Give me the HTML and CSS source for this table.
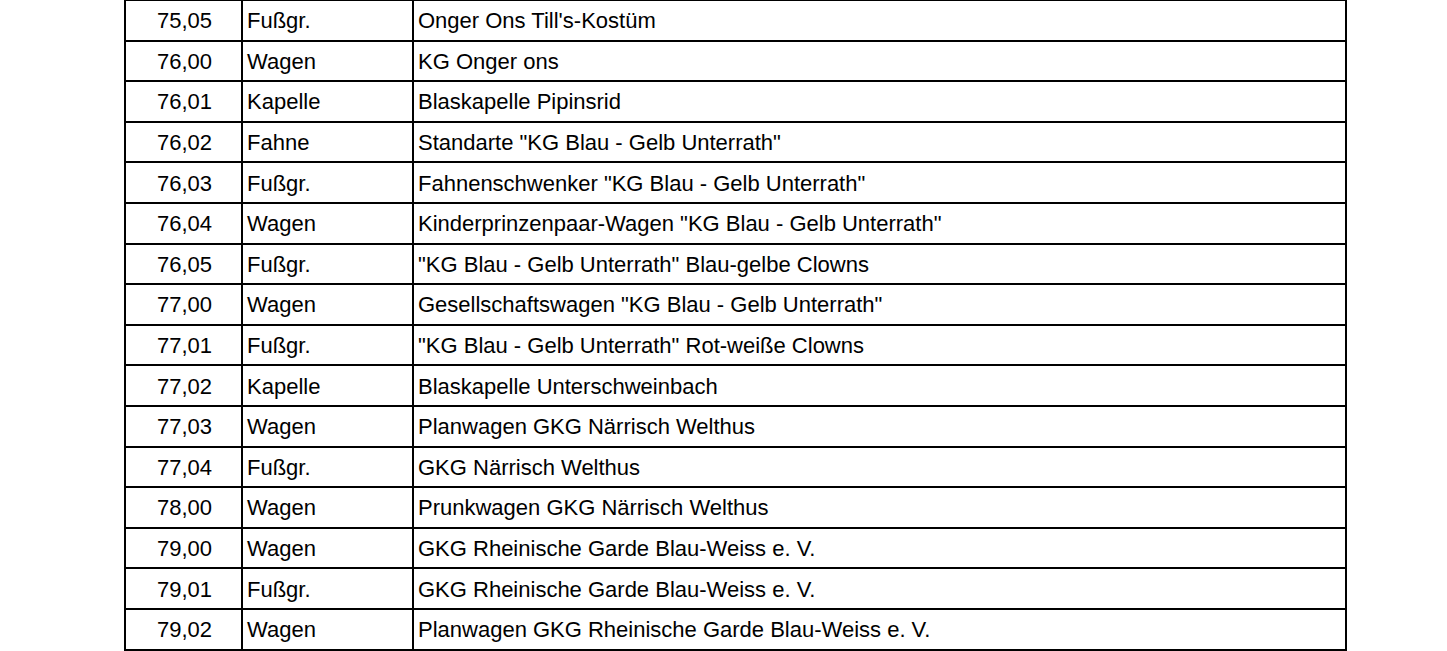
FILE: index.html
```html
<!DOCTYPE html>
<html>
<head>
<meta charset="utf-8">
<link rel="stylesheet" href="styles.css">
</head>
<body>
<table class="list">
<colgroup><col class="c1"><col class="c2"><col class="c3"></colgroup>
<tr><td class="num">75,05</td><td>Fußgr.</td><td>Onger Ons Till's-Kostüm</td></tr>
<tr><td class="num">76,00</td><td>Wagen</td><td>KG Onger ons</td></tr>
<tr><td class="num">76,01</td><td>Kapelle</td><td>Blaskapelle Pipinsrid</td></tr>
<tr><td class="num">76,02</td><td>Fahne</td><td>Standarte "KG Blau - Gelb Unterrath"</td></tr>
<tr><td class="num">76,03</td><td>Fußgr.</td><td>Fahnenschwenker "KG Blau - Gelb Unterrath"</td></tr>
<tr><td class="num">76,04</td><td>Wagen</td><td>Kinderprinzenpaar-Wagen "KG Blau - Gelb Unterrath"</td></tr>
<tr><td class="num">76,05</td><td>Fußgr.</td><td>"KG Blau - Gelb Unterrath" Blau-gelbe Clowns</td></tr>
<tr><td class="num">77,00</td><td>Wagen</td><td>Gesellschaftswagen "KG Blau - Gelb Unterrath"</td></tr>
<tr><td class="num">77,01</td><td>Fußgr.</td><td>"KG Blau - Gelb Unterrath" Rot-weiße Clowns</td></tr>
<tr><td class="num">77,02</td><td>Kapelle</td><td>Blaskapelle Unterschweinbach</td></tr>
<tr><td class="num">77,03</td><td>Wagen</td><td>Planwagen GKG Närrisch Welthus</td></tr>
<tr><td class="num">77,04</td><td>Fußgr.</td><td>GKG Närrisch Welthus</td></tr>
<tr><td class="num">78,00</td><td>Wagen</td><td>Prunkwagen GKG Närrisch Welthus</td></tr>
<tr><td class="num">79,00</td><td>Wagen</td><td>GKG Rheinische Garde Blau-Weiss e. V.</td></tr>
<tr><td class="num">79,01</td><td>Fußgr.</td><td>GKG Rheinische Garde Blau-Weiss e. V.</td></tr>
<tr><td class="num">79,02</td><td>Wagen</td><td>Planwagen GKG Rheinische Garde Blau-Weiss e. V.</td></tr>
</table>
</body>
</html>
```
FILE: styles.css
```css
html, body {
  margin: 0;
  padding: 0;
  background: #fff;
  overflow: hidden;
}
.list {
  border-collapse: collapse;
  table-layout: fixed;
  margin: -1px 0 0 124px;
  width: 1221px;
  font-family: "Liberation Sans", Arial, sans-serif;
  font-size: 22px;
  color: #000;
}
.c1 { width: 117px; }
.c2 { width: 171px; }
.c3 { width: 933px; }
.list tr { height: 40.6px; }
.list td {
  border: 2px solid #000;
  padding: 2px 0 0 4px;
  white-space: nowrap;
  line-height: 22px;
  vertical-align: middle;
}
.list td.num {
  text-align: center;
  padding-left: 2px;
}
```
